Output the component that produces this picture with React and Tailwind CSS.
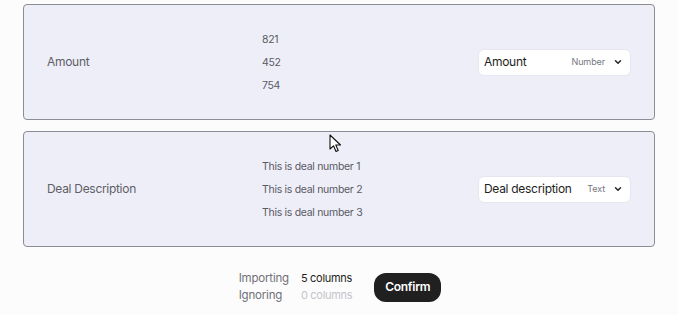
import React from "react";

const rows = [
  {
    label: "Amount",
    values: ["821", "452", "754"],
    field: "Amount",
    type: "Number",
  },
  {
    label: "Deal Description",
    values: ["This is deal number 1", "This is deal number 2", "This is deal number 3"],
    field: "Deal description",
    type: "Text",
  },
];

const Chevron = () => (
  <svg width="10" height="10" viewBox="0 0 24 24" fill="none" stroke="#222" strokeWidth="3.5" strokeLinecap="round" strokeLinejoin="round">
    <path d="M6 9l6 6 6-6" />
  </svg>
);

const Cursor = () => (
  <svg width="13" height="19" viewBox="0 0 13 19" className="absolute left-[329px] top-[134px]">
    <path d="M1 1 L1 15 L4.5 11.8 L7 17.5 L9.2 16.5 L6.8 11 L11.5 11 Z" fill="#fff" stroke="#111" strokeWidth="1.1" strokeLinejoin="round" />
  </svg>
);

const ColumnCard = ({ row }) => (
  <div className="flex h-[116px] items-center rounded-[4px] border border-[#8c8c94] bg-[#eeeef9] pl-[23px] pr-[23px]">
    <div className="w-[215px] text-[12px] tracking-[-0.3px] text-[#5e5e66]">{row.label}</div>
    <div className="flex flex-1 flex-col">
      {row.values.map((v) => (
        <div key={v} className="h-[23px] leading-[23px] text-[10.5px] tracking-[-0.3px] text-[#5a5a62]">
          {v}
        </div>
      ))}
    </div>
    <div className="flex h-[27px] w-[153px] items-center rounded-md border border-[#e6e6ee] bg-white pl-[5px] pr-[7px]">
      <span className="flex-1 text-[12px] tracking-[-0.3px] text-[#1e1e22]">{row.field}</span>
      <span className="mr-[8px] text-[9px] tracking-[-0.1px] text-[#77777f]">{row.type}</span>
      <Chevron />
    </div>
  </div>
);

export default function App() {
  return (
    <div
      className="relative h-[315px] w-[678px] overflow-hidden bg-[#fcfcfc]"
      style={{ fontFamily: "Inter, 'Noto Sans', sans-serif" }}
    >
      <div className="flex flex-col gap-[11px] px-[23px] pt-[4px]">
        {rows.map((r) => (
          <ColumnCard key={r.label} row={r} />
        ))}
      </div>
      <div className="mt-[23px] flex items-center justify-center gap-[22px] pl-[2px]">
        <div className="grid grid-cols-[auto_auto] gap-x-[12px] leading-[17px]">
          <span className="text-[11.5px] tracking-[-0.2px] text-[#707078]">Importing</span>
          <span className="text-[11px] tracking-[-0.3px] text-[#1e1e22]">5 columns</span>
          <span className="text-[11.5px] tracking-[-0.2px] text-[#707078]">Ignoring</span>
          <span className="text-[11px] tracking-[-0.3px] text-[#c4c4ca]">0 columns</span>
        </div>
        <button className="h-[29px] w-[67px] rounded-[12px] bg-[#202020] text-[12px] font-semibold tracking-[-0.3px] text-white">
          Confirm
        </button>
      </div>
      <Cursor />
    </div>
  );
}
